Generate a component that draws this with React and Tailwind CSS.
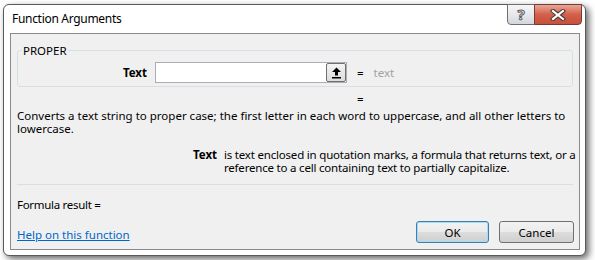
import React from 'react';

const font = { fontFamily: '"Segoe UI", "Noto Sans", sans-serif' };

const CaptionButtons = () => (
    <div className="absolute top-[-1px] right-[3px] flex">
        {/* Help */}
        <div className="w-[28px] h-[21px] border border-[#6f6f6f] rounded-bl-[4px] bg-gradient-to-b from-[#f7f7f7] via-[#e6e8ec] to-[#d3d7dd] flex items-center justify-center">
            <span className="text-[15px] font-bold leading-none text-[#f4f4f4] [-webkit-text-stroke:1px_#5c5c5c]" style={font}>?</span>
        </div>
        {/* Close */}
        <div className="w-[48px] h-[21px] -ml-[1px] border border-[#7a3a30] rounded-br-[4px] bg-gradient-to-b from-[#e8a797] via-[#d2604a] to-[#c8503b] flex items-center justify-center">
            <svg width="16" height="12" viewBox="0 0 16 12">
                <path d="M3 2 L13 10 M13 2 L3 10" stroke="#4a3a3a" strokeWidth="4.2" strokeLinecap="square" />
                <path d="M3 2 L13 10 M13 2 L3 10" stroke="#ffffff" strokeWidth="2.2" strokeLinecap="square" />
            </svg>
        </div>
    </div>
);

const Button = ({ children, focused, width }) => (
    <div
        className={`h-[22px] rounded-[3px] border flex items-center justify-center bg-[linear-gradient(to_bottom,#f2f2f2_0%,#ebebeb_50%,#dddddd_50%,#cfcfcf_100%)] ${focused ? 'border-[#3c7fb1] shadow-[inset_0_0_0_1px_#a9d9f5]' : 'border-[#707070]'} ${width}`}
    >
        {children}
    </div>
);

const App = () => {
    return (
        <div className="w-[595px] h-[260px] bg-white overflow-hidden pl-[3px] pt-[4px] text-[11.5px] text-black" style={font}>
            {/* Window */}
            <div className="relative w-[583px] h-[252px] border border-[#5a5a5a] rounded-[6px] bg-white shadow-[3px_3px_7px_rgba(0,0,0,0.6)] flex flex-col pl-[6px] pr-[5px] pb-[5px]">
                {/* Title bar */}
                <div className="h-[28px] flex items-center pl-[2px] text-[12px]">
                    <span className="-mt-[1px] tracking-[-0.3px]">Function Arguments</span>
                </div>
                <CaptionButtons />

                {/* Client area */}
                <div className="flex-1 border border-[#8a8a8a] bg-[#f0f0f0] flex flex-col px-[6px] leading-[13px]">
                    {/* Group box */}
                    <div className="relative mt-[16px] h-[37px] border border-[#d5dfe5] rounded-[3px] pt-[11px]">
                        <span className="absolute left-[4px] top-[-7px] bg-[#f0f0f0] px-[1px] leading-[13px]">PROPER</span>
                        <div className="flex items-center">
                            <span className="w-[129px] shrink-0 text-right font-bold">Text</span>
                            <div className="ml-[8px] w-[192px] h-[21px] border border-[#abadb3] bg-white flex justify-end">
                                <div className="w-[20px] h-[19px] border border-[#707070] rounded-[2px] bg-gradient-to-b from-[#f4f4f4] to-[#dcdcdc] flex items-center justify-center">
                                    <svg width="11" height="12" viewBox="0 0 11 12">
                                        <path d="M5.5 0.5 L10 5 L7 5 L7 8.5 L4 8.5 L4 5 L1 5 Z" fill="#000" />
                                        <rect x="1" y="10" width="9" height="1.5" fill="#000" />
                                    </svg>
                                </div>
                            </div>
                            <span className="ml-[10px]">=</span>
                            <span className="ml-[10px] text-[#a0a0a0]">text</span>
                        </div>
                    </div>

                    {/* Result of function */}
                    <div className="mt-[5px] pl-[340px]">=</div>

                    {/* Description */}
                    <div className="mt-[4px] whitespace-nowrap">
                        Converts a text string to proper case; the first letter in each word to uppercase, and all other letters to
                        <br />
                        lowercase.
                    </div>

                    {/* Argument help */}
                    <div className="mt-[13px] flex whitespace-nowrap">
                        <span className="ml-[176px] w-[31px] shrink-0 font-bold">Text</span>
                        <div className="tracking-[-0.2px]">
                            is text enclosed in quotation marks, a formula that returns text, or a
                            <br />
                            reference to a cell containing text to partially capitalize.
                        </div>
                    </div>

                    <div className="mt-[10px] h-[1px] bg-[#d5dfe5]" />

                    <div className="mt-[13px] tracking-[-0.3px]">Formula result =</div>

                    {/* Bottom row */}
                    <div className="mt-[10px] flex items-start">
                        <a href="#" className="mt-[7px] text-[#0066cc] underline">Help on this function</a>
                        <div className="ml-auto flex gap-[10px] -mr-[1px]">
                            <Button focused width="w-[73px]">OK</Button>
                            <Button width="w-[75px]">Cancel</Button>
                        </div>
                    </div>
                </div>
            </div>
        </div>
    );
};

export default App;
